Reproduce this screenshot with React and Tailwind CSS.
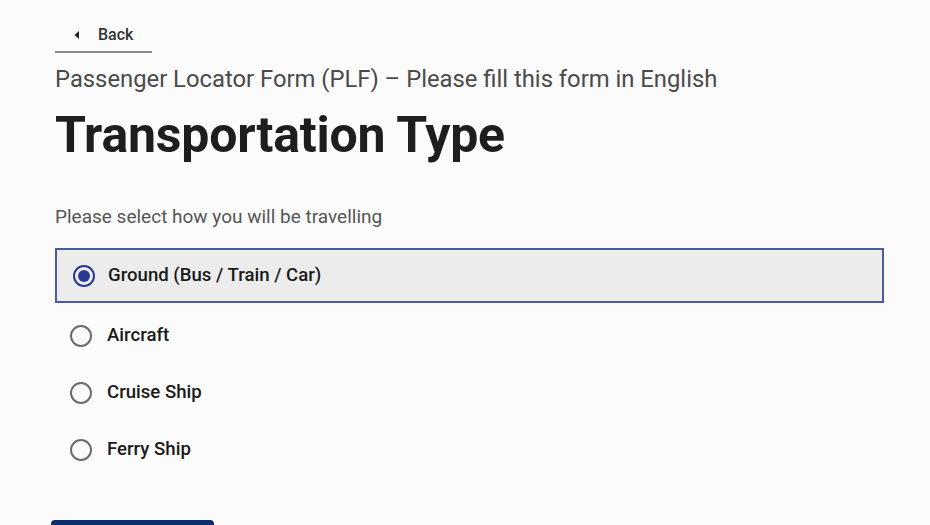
import React, { useState } from "react";

const options = [
  "Ground (Bus / Train / Car)",
  "Aircraft",
  "Cruise Ship",
  "Ferry Ship",
];

const Radio = ({ checked }) => (
  <span
    className={`flex h-[22px] w-[22px] shrink-0 items-center justify-center rounded-full border-2 ${
      checked ? "border-[#2b3990]" : "border-[#6b6b6b]"
    }`}
  >
    {checked && <span className="h-[12px] w-[12px] rounded-full bg-[#2b3990]" />}
  </span>
);

const App = () => {
  const [selected, setSelected] = useState(0);

  return (
    <div className="h-[525px] w-[930px] overflow-hidden bg-[#fbfbfb] font-['Roboto',sans-serif] text-[#222]">
      <div className="pl-[55px] pt-[25px]">
        <a href="#" className="flex w-[97px] items-center border-b-2 border-[#8a8a8a] pb-[6px] pl-[18px] text-[16px] font-medium leading-[20px] text-[#333]">
          <svg width="8" height="10" viewBox="0 0 8 10" className="mr-[17px]">
            <path d="M6 1 L1.5 5 L6 9 Z" fill="#222" />
          </svg>
          Back
        </a>
        <p className="mt-[11px] text-[23.8px] leading-[30px] text-[#4a4a4a]">
          Passenger Locator Form (PLF) – Please fill this form in English
        </p>
        <h1 className="mt-[13px] text-[50px] font-bold leading-[56px] tracking-[-0.2px] text-[#1e1e1e]">
          Transportation Type
        </h1>
        <p className="mt-[42px] text-[19px] leading-[24px] text-[#555]">
          Please select how you will be travelling
        </p>
        <div className="mt-[19px] w-[829px]">
          {options.map((opt, i) => (
            <label
              key={opt}
              onClick={() => setSelected(i)}
              className={`flex cursor-pointer items-center ${
                selected === i
                  ? "mb-[4px] h-[55px] gap-[13px] border-2 border-[#4b5a9b] bg-[#ececec] pl-[16px]"
                  : "h-[57px] gap-[15px] pl-[15px]"
              }`}
            >
              <Radio checked={selected === i} />
              <span className="text-[18.6px] font-medium text-[#1a1a1a]">{opt}</span>
            </label>
          ))}
        </div>
      </div>
      <div className="ml-[51px] mt-[42px] h-[20px] w-[163px] rounded-[4px] bg-[#0c2d6b]" />
    </div>
  );
};

export default App;
